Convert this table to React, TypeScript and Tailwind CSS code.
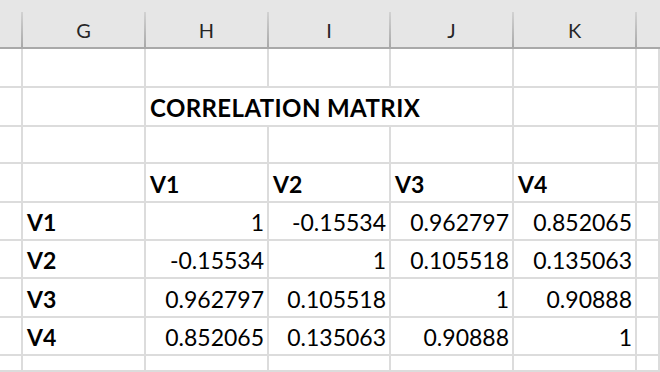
const columns = ["", "G", "H", "I", "J", "K", ""];

const labels = ["V1", "V2", "V3", "V4"];

const matrix = [
  ["1", "-0.15534", "0.962797", "0.852065"],
  ["-0.15534", "1", "0.105518", "0.135063"],
  ["0.962797", "0.105518", "1", "0.90888"],
  ["0.852065", "0.135063", "0.90888", "1"],
];

const cell = "border-r-2 border-b-2 border-[#dcdcdc] flex items-end pb-[5px] leading-none min-w-0";

function HeaderCell({ label, last }: { label: string; last: boolean }) {
  return (
    <div className="flex bg-[#e6e6e6] border-b-2 border-[#a9a9a9] min-w-0">
      <div className="flex-1 text-center text-[20px] leading-none pt-[20px] text-[#262626]">
        {label}
      </div>
      {!last && (
        <div className="w-[2px] h-[35px] self-end bg-gradient-to-b from-[#d2d2d2] to-[#a9a9a9]" />
      )}
    </div>
  );
}

function Empty() {
  return <div className={cell} />;
}

export default function App() {
  return (
    <div
      className="w-[660px] h-[372px] overflow-hidden bg-white text-black text-[23px]"
      style={{ fontFamily: "Lato, 'Open Sans', sans-serif" }}
    >
      <div className="grid grid-cols-[23px_123px_123px_122px_123px_123px_1fr] grid-rows-[49px_39px_39px_37px_39px_38px_38px_39px_38px_1fr] h-full">
        {columns.map((c, i) => (
          <HeaderCell key={i} label={c} last={i === columns.length - 1} />
        ))}

        {/* empty row */}
        {columns.map((_, i) => (
          <Empty key={i} />
        ))}

        {/* title row */}
        <Empty />
        <Empty />
        <div className={`${cell} col-span-3 pl-[4px] font-bold whitespace-nowrap text-[24px] tracking-[0.4px]`}>
          CORRELATION MATRIX
        </div>
        <Empty />
        <Empty />

        {/* empty row */}
        {columns.map((_, i) => (
          <Empty key={i} />
        ))}

        {/* column labels */}
        <Empty />
        <Empty />
        {labels.map((l) => (
          <div key={l} className={`${cell} pl-[4px] font-bold`}>
            {l}
          </div>
        ))}
        <Empty />

        {matrix.map((row, r) => (
          <div key={r} className="contents">
            <Empty />
            <div className={`${cell} pl-[4px] font-bold`}>{labels[r]}</div>
            {row.map((v, c) => (
              <div key={c} className={`${cell} justify-end pr-[3px]`}>
                {v}
              </div>
            ))}
            <Empty />
          </div>
        ))}

        {/* trailing row */}
        {columns.map((_, i) => (
          <Empty key={i} />
        ))}
      </div>
    </div>
  );
}
